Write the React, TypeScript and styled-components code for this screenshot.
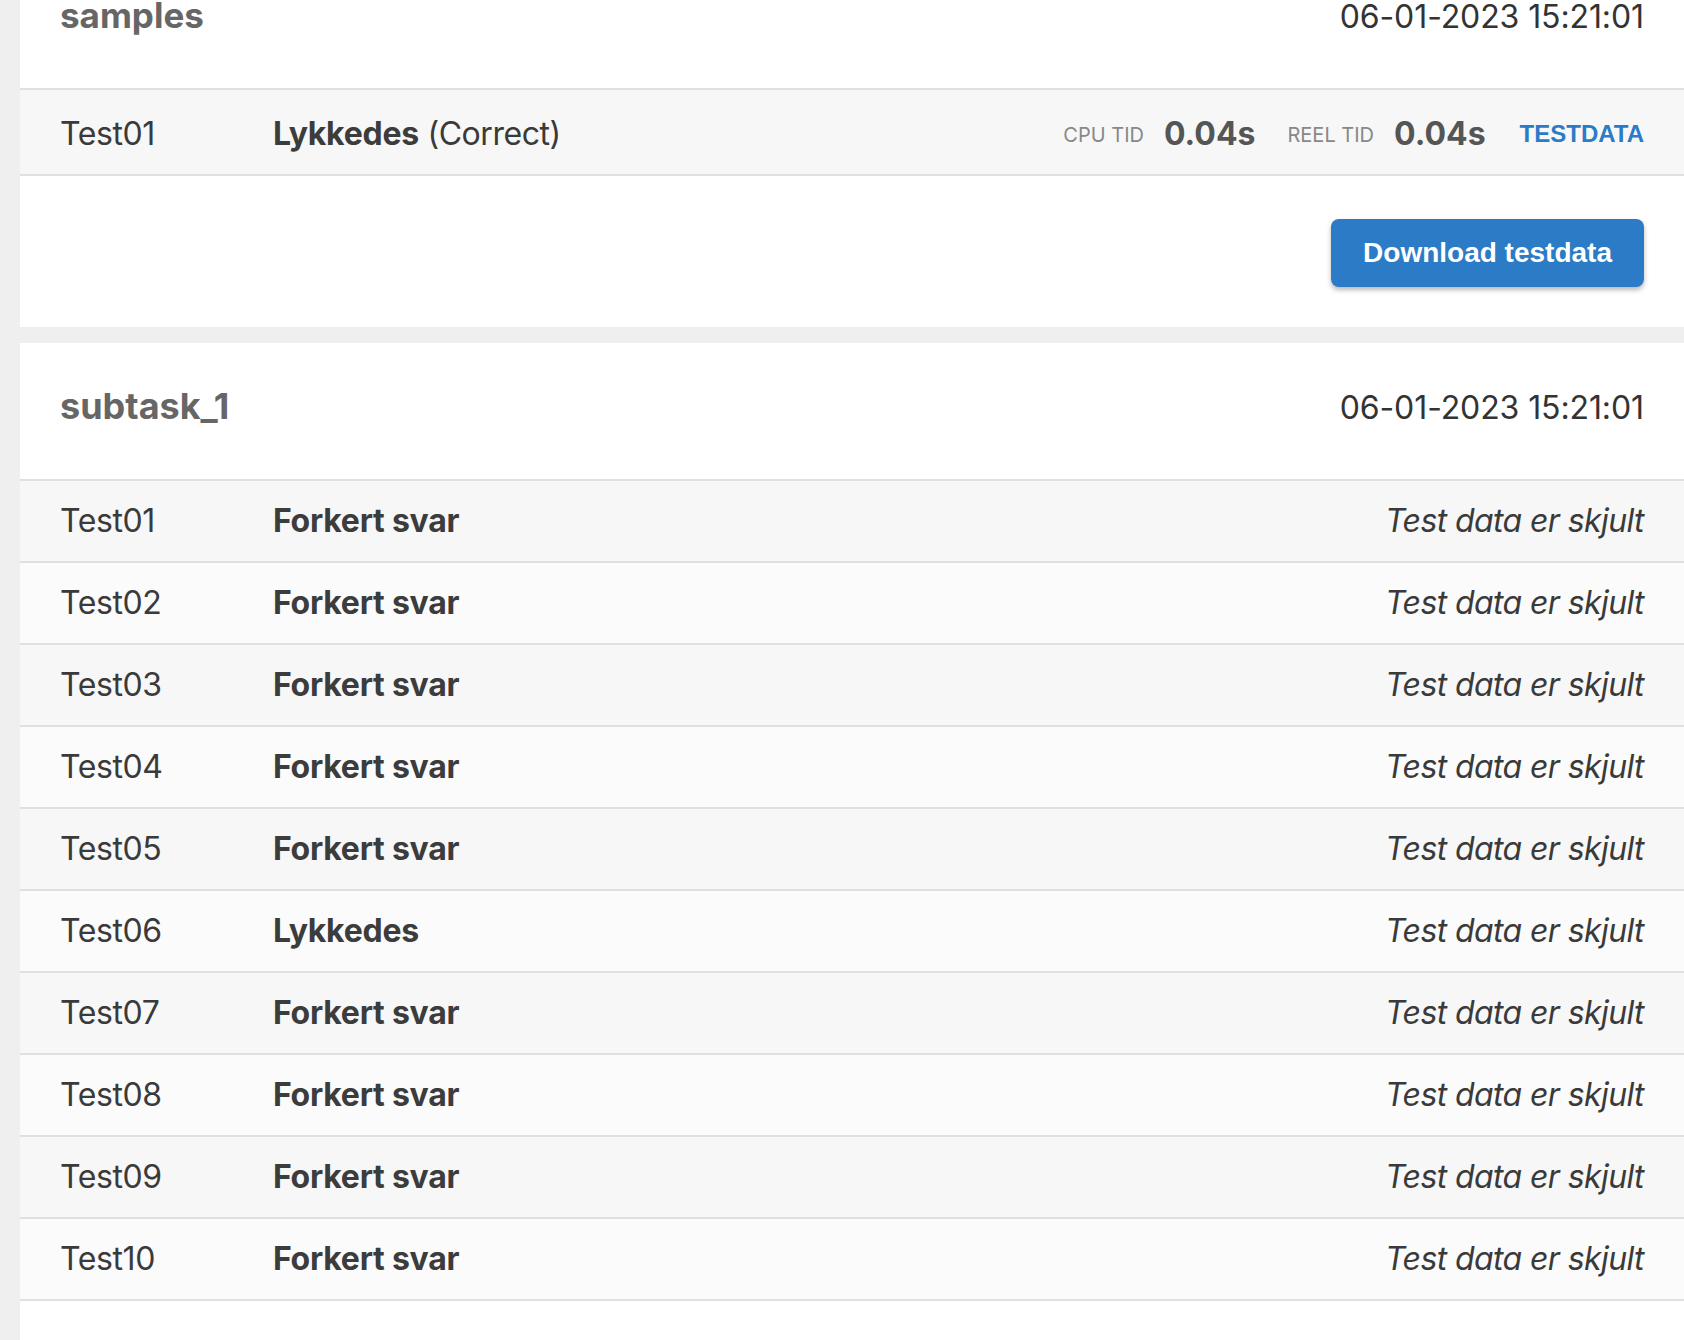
import React from 'react';
import styled, { createGlobalStyle } from 'styled-components';

const GlobalStyle = createGlobalStyle`
  html, body {
    margin: 0;
    padding: 0;
    background: #efefef;
    font-family: Inter, "Noto Sans", sans-serif;
    color: #333;
    overflow: hidden;
  }
`;

const Page = styled.main`
  padding-left: 20px;
  margin-top: -48px;
  display: flex;
  flex-direction: column;
  gap: 16px;
`;

const Card = styled.section`
  background: #fff;
`;

const CardHeader = styled.header`
  box-sizing: border-box;
  height: 138px;
  padding: 43px 40px 0;
  display: flex;
  justify-content: space-between;
  align-items: baseline;
  border-bottom: 2px solid #e0e0e0;
`;

const GroupName = styled.h2<{ $size?: number }>`
  margin: 0;
  font-size: ${(p) => p.$size ?? 36}px;
  line-height: 40px;
  font-weight: 700;
  color: #666;
`;

const Timestamp = styled.span`
  font-size: 32px;
  line-height: 40px;
  color: #333;
  letter-spacing: -0.1px;
`;

const Row = styled.div<{ $odd: boolean }>`
  display: flex;
  align-items: center;
  padding: 24px 40px;
  background: ${(p) => (p.$odd ? '#f7f7f7' : '#fbfbfb')};
  border-bottom: 2px solid #e0e0e0;
  font-size: 32px;
  line-height: 32px;
`;

const SampleRow = styled(Row)`
  padding: 26px 40px 22px;
`;

const TestName = styled.span`
  width: 213px;
  flex-shrink: 0;
  color: #3a3a3a;
  letter-spacing: -0.4px;
`;

const Verdict = styled.span`
  flex: 1;
  color: #3a3a3a;
  letter-spacing: -0.45px;
  b {
    font-weight: 700;
    color: #3c3c3c;
    letter-spacing: -0.25px;
  }
`;

const Hidden = styled.span`
  font-style: italic;
  color: #3a3a3a;
  letter-spacing: -0.6px;
`;

const Stats = styled.div`
  display: flex;
  align-items: center;
  height: 36px;
`;

const StatLabel = styled.span`
  font-size: 20px;
  line-height: 20px;
  color: #888;
  margin-right: 20px;
  padding-top: 2px;
`;

const StatValue = styled.span`
  font-size: 32px;
  line-height: 36px;
  font-weight: 700;
  color: #555;
  margin-right: 32px;
`;

const DataLink = styled.a`
  font-family: "Liberation Sans", Arial, sans-serif;
  font-size: 24px;
  line-height: 24px;
  font-weight: 700;
  color: #2a7bc8;
  text-decoration: none;
  margin-left: 2px;
`;

const Footer = styled.div`
  display: flex;
  justify-content: flex-end;
  padding: 43px 40px 40px;
`;

const DownloadButton = styled.button`
  height: 68px;
  padding: 0 32px;
  border: none;
  border-radius: 8px;
  background: #2b7bc6;
  color: #fff;
  font-family: "Liberation Sans", Arial, sans-serif;
  font-size: 28px;
  font-weight: 700;
  box-shadow: 0 3px 5px rgba(0, 0, 0, 0.28);
  cursor: pointer;
`;

const subtaskResults = [
  'Forkert svar',
  'Forkert svar',
  'Forkert svar',
  'Forkert svar',
  'Forkert svar',
  'Lykkedes',
  'Forkert svar',
  'Forkert svar',
  'Forkert svar',
  'Forkert svar',
];

const App = () => {
  return (
    <>
      <GlobalStyle />
      <Page>
        <Card>
          <CardHeader>
            <GroupName $size={35}>samples</GroupName>
            <Timestamp>06-01-2023 15:21:01</Timestamp>
          </CardHeader>
          <SampleRow $odd>
            <TestName>Test01</TestName>
            <Verdict>
              <b>Lykkedes</b> (Correct)
            </Verdict>
            <Stats>
              <StatLabel>CPU TID</StatLabel>
              <StatValue>0.04s</StatValue>
              <StatLabel>REEL TID</StatLabel>
              <StatValue>0.04s</StatValue>
              <DataLink href="#">TESTDATA</DataLink>
            </Stats>
          </SampleRow>
          <Footer>
            <DownloadButton>Download testdata</DownloadButton>
          </Footer>
        </Card>

        <Card>
          <CardHeader>
            <GroupName>subtask_1</GroupName>
            <Timestamp>06-01-2023 15:21:01</Timestamp>
          </CardHeader>
          {subtaskResults.map((result, i) => (
            <Row key={i} $odd={i % 2 === 0}>
              <TestName>Test{String(i + 1).padStart(2, '0')}</TestName>
              <Verdict>
                <b>{result}</b>
              </Verdict>
              <Hidden>Test data er skjult</Hidden>
            </Row>
          ))}
          <Footer />
        </Card>
      </Page>
    </>
  );
};

export default App;
